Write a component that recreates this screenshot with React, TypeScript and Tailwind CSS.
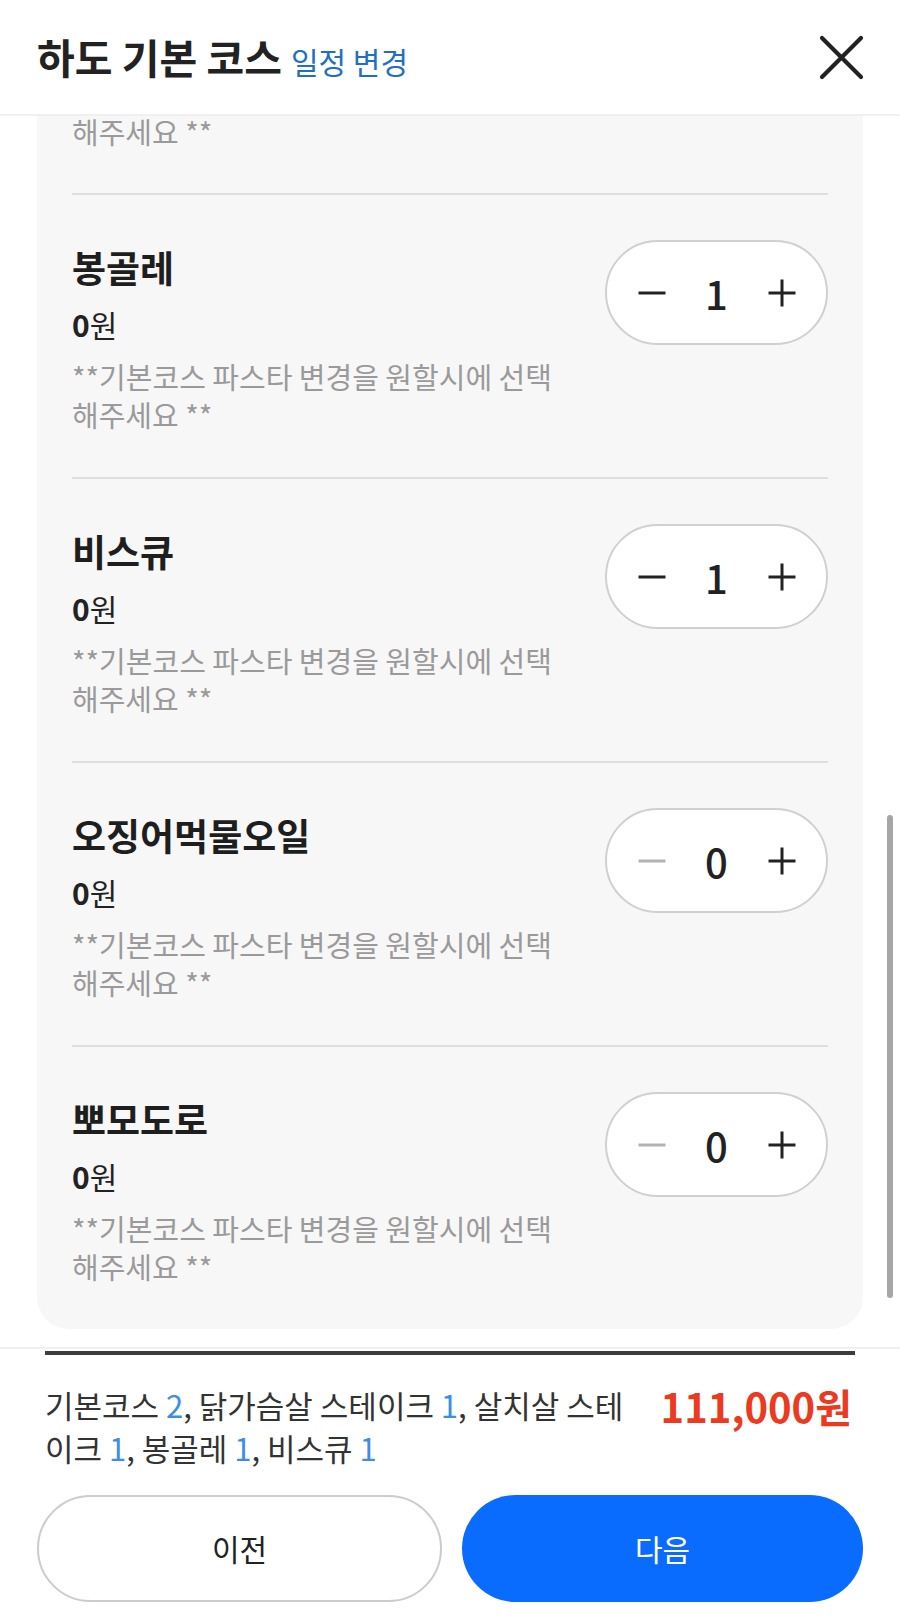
import React from "react";

type Option = {
  name: string;
  price: string;
  count: number;
};

const OPTIONS: Option[] = [
  { name: "봉골레", price: "0", count: 1 },
  { name: "비스큐", price: "0", count: 1 },
  { name: "오징어먹물오일", price: "0", count: 0 },
  { name: "뽀모도로", price: "0", count: 0 },
];

const NOTE = "**기본코스 파스타 변경을 원할시에 선택해주세요 **";

function MinusIcon({ disabled }: { disabled: boolean }) {
  return (
    <svg width="28" height="28" viewBox="0 0 28 28" fill="none">
      <line
        x1="0.5"
        y1="14"
        x2="27.5"
        y2="14"
        stroke={disabled ? "#b3b3b3" : "#222222"}
        strokeWidth="3"
      />
    </svg>
  );
}

function PlusIcon() {
  return (
    <svg width="28" height="28" viewBox="0 0 28 28" fill="none">
      <line x1="0.5" y1="14" x2="27.5" y2="14" stroke="#222222" strokeWidth="3" />
      <line x1="14" y1="0.5" x2="14" y2="27.5" stroke="#222222" strokeWidth="3" />
    </svg>
  );
}

function Stepper({ count }: { count: number }) {
  return (
    <div className="flex h-[105px] w-[223px] shrink-0 items-center rounded-full border-2 border-[#d0d0d0] bg-white px-[12px]">
      <button className="flex w-[65px] items-center justify-center">
        <MinusIcon disabled={count === 0} />
      </button>
      <span className="w-[65px] text-center text-[40px] font-medium leading-none text-[#222]">
        {count}
      </span>
      <button className="flex w-[65px] items-center justify-center">
        <PlusIcon />
      </button>
    </div>
  );
}

function OptionRow({ option }: { option: Option }) {
  return (
    <div className="flex items-start justify-between border-t-2 border-[#dedede] pb-[44px] pt-[45px]">
      <div className="w-[492px]">
        <p className="mt-[3px] text-[37px] font-bold leading-[48px] text-[#1e1e1e]">{option.name}</p>
        <p className="mt-[13px] text-[30px] leading-[40px] text-[#222]">
          <span className="font-bold">{option.price}</span>
          <span>원</span>
        </p>
        <p className="mt-[13px] text-[29px] leading-[38px] text-[#9a9a9a]">{NOTE}</p>
      </div>
      <Stepper count={option.count} />
    </div>
  );
}

function CloseIcon() {
  return (
    <svg width="45" height="45" viewBox="0 0 45 45" fill="none">
      <path d="M3 3 L42 42 M42 3 L3 42" stroke="#222222" strokeWidth="4.2" strokeLinecap="round" />
    </svg>
  );
}

function Num({ children }: { children: React.ReactNode }) {
  return <span className="text-[#3b8ee6]">{children}</span>;
}

export default function App() {
  return (
    <div className="flex h-[1624px] w-[900px] flex-col overflow-hidden bg-white font-['Noto_Sans_CJK_KR','Noto_Sans',sans-serif]">
      {/* Header */}
      <header className="flex h-[116px] shrink-0 items-center justify-between border-b-2 border-[#f0f0f0] pl-[37px] pr-[36px]">
        <div className="flex items-baseline">
          <h1 className="text-[41px] font-bold text-[#222]">하도 기본 코스</h1>
          <button className="ml-[9px] text-[30px] text-[#1f6fc5]">일정 변경</button>
        </div>
        <button className="flex items-center justify-center">
          <CloseIcon />
        </button>
      </header>

      {/* Scrolled option list */}
      <div className="relative flex-1 overflow-hidden">
        <div className="mx-[37px] rounded-b-[32px] bg-[#f7f7f7] px-[35px]">
          {/* tail of the previous option, scrolled under the header */}
          <p className="pb-[47px] text-[29px] leading-[30px] text-[#9a9a9a]">해주세요 **</p>
          {OPTIONS.map((option) => (
            <OptionRow key={option.name} option={option} />
          ))}
        </div>
        <div className="absolute right-[7px] top-[699px] h-[483px] w-[6px] rounded-full bg-[#a6a6a6]" />
      </div>

      {/* Footer */}
      <footer className="shrink-0 border-t-2 border-[#f0f0f0] pb-[22px]">
        <div className="mx-[45px] mt-[2px] h-[4px] bg-[#3d3d3d]" />
        <div className="mt-[28px] flex items-start justify-between pl-[45px] pr-[48px]">
          <p className="w-[590px] text-[31px] leading-[43px] text-[#333]">
            기본코스 <Num>2</Num>, 닭가슴살 스테이크 <Num>1</Num>, 살치살 스테이크 <Num>1</Num>, 봉골레{" "}
            <Num>1</Num>, 비스큐 <Num>1</Num>
          </p>
          <p className="mt-[2px] text-[40px] font-semibold leading-[43px] text-[#eb3a1f]">111,000원</p>
        </div>
        <div className="mt-[26px] flex gap-[20px] px-[37px]">
          <button className="h-[107px] flex-1 rounded-full border-2 border-[#cccccc] bg-white text-[30px] text-[#222]">
            이전
          </button>
          <button className="h-[107px] flex-1 rounded-full bg-[#0a6cff] text-[30px] text-white">
            다음
          </button>
        </div>
      </footer>
    </div>
  );
}
